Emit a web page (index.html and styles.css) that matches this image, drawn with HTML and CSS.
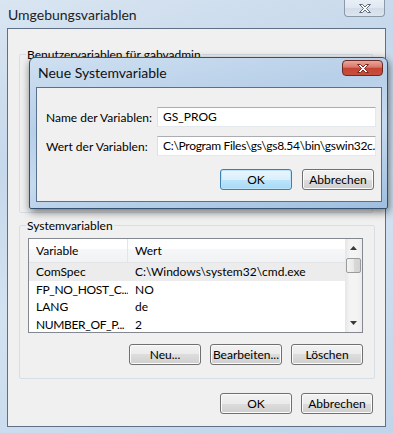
FILE: index.html
```html
<!DOCTYPE html>
<html lang="de">
<head>
    <meta charset="UTF-8">
    <meta name="viewport" content="width=device-width, initial-scale=1.0">
    <title>Umgebungsvariablen</title>
    <link rel="stylesheet" href="styles.css">
</head>
<body>
    <div class="window">
        <div class="titlebar">
            <span class="title">Umgebungsvariablen</span>
            <div class="close-btn">
                <svg width="14" height="11" viewBox="0 0 14 11">
                    <path d="M1.5 1.5h3l2.5 2.5 2.5-2.5h3l-4 4 4 4h-3l-2.5-2.5-2.5 2.5h-3l4-4z" fill="#fff" stroke="#5f6b78" stroke-width="1" stroke-linejoin="round"/>
                </svg>
            </div>
        </div>

        <div class="client">
            <fieldset class="group user-group">
                <legend>Benutzervariablen für gabvadmin</legend>
                <div class="user-space"></div>
            </fieldset>

            <fieldset class="group sys-group">
                <legend>Systemvariablen</legend>
                <div class="listview">
                    <div class="lv-main">
                        <div class="lv-header">
                            <div class="lv-col first">Variable</div>
                            <div class="lv-col">Wert</div>
                        </div>
                        <div class="lv-row selected">
                            <div class="lv-col">ComSpec</div>
                            <div class="lv-col">C:\Windows\system32\cmd.exe</div>
                        </div>
                        <div class="lv-row">
                            <div class="lv-col trunc">FP_NO_HOST_C...</div>
                            <div class="lv-col">NO</div>
                        </div>
                        <div class="lv-row">
                            <div class="lv-col">LANG</div>
                            <div class="lv-col">de</div>
                        </div>
                        <div class="lv-row">
                            <div class="lv-col trunc">NUMBER_OF_P...</div>
                            <div class="lv-col">2</div>
                        </div>
                    </div>
                    <div class="scrollbar">
                        <div class="sb-arrow">
                            <svg width="7" height="4" viewBox="0 0 7 4"><path d="M0 4h7L3.5 0z" fill="#3a3a3a"/></svg>
                        </div>
                        <div class="sb-thumb"></div>
                        <div class="sb-track"></div>
                        <div class="sb-arrow">
                            <svg width="7" height="4" viewBox="0 0 7 4"><path d="M0 0h7L3.5 4z" fill="#3a3a3a"/></svg>
                        </div>
                    </div>
                </div>
                <div class="btn-row">
                    <div class="btn">Neu...</div>
                    <div class="btn">Bearbeiten...</div>
                    <div class="btn">Löschen</div>
                </div>
            </fieldset>

            <div class="btn-row footer">
                <div class="btn">OK</div>
                <div class="btn">Abbrechen</div>
            </div>
        </div>

        <!-- modal dialog on top of the environment window -->
        <div class="dialog">
            <div class="dialog-titlebar">
                <span class="dialog-title">Neue Systemvariable</span>
                <div class="close-btn red">
                    <svg width="14" height="11" viewBox="0 0 14 11">
                        <path d="M1.5 1.5h3l2.5 2.5 2.5-2.5h3l-4 4 4 4h-3l-2.5-2.5-2.5 2.5h-3l4-4z" fill="#fff" stroke="#7a2a22" stroke-width="1" stroke-linejoin="round"/>
                    </svg>
                </div>
            </div>
            <div class="dialog-client">
                <div class="form">
                    <label>Name der Variablen:</label>
                    <div class="textbox">GS_PROG</div>
                    <label>Wert der Variablen:</label>
                    <div class="textbox path">C:\Program Files\gs\gs8.54\bin\gswin32c.exe</div>
                </div>
                <div class="btn-row dialog-buttons">
                    <div class="btn default">OK</div>
                    <div class="btn">Abbrechen</div>
                </div>
            </div>
        </div>
    </div>
</body>
</html>
```

FILE: styles.css
```css
body {
    margin: 0;
    font-family: Lato, 'Noto Sans', Arial, sans-serif;
    font-size: 12px;
    color: #000;
    background-color: #c9dbee;
}
.window {
    position: relative;
    width: 393px;
    height: 433px;
    box-sizing: border-box;
    padding: 0 7px 6px 7px;
    display: flex;
    flex-direction: column;
    background: linear-gradient(160deg, #d9e5f1 0%, #c6d8eb 30%, #d3e2f1 55%, #c0d5ea 100%);
}
.titlebar {
    height: 28px;
    display: flex;
    align-items: flex-start;
    padding-left: 1px;
}
.title {
    font-size: 14px;
    line-height: 30px;
    color: #1d1d1d;
}
.close-btn {
    margin-left: auto;
    margin-right: 1px;
    width: 41px;
    height: 17px;
    box-sizing: border-box;
    border: 1px solid #8b99a8;
    border-top: none;
    border-radius: 0 0 4px 4px;
    background: linear-gradient(#e9eff6 0%, #dfe7f0 50%, #d2dde9 51%, #dce6f0 100%);
    display: flex;
    align-items: center;
    justify-content: center;
}
.close-btn.red {
    margin-top: 2px;
    margin-right: 4px;
    height: 16px;
    border: 1px solid #6b2a22;
    border-radius: 4px;
    background: linear-gradient(#e8a89b 0%, #d9776a 45%, #c44433 50%, #c7503d 100%);
}
.client {
    flex: 1;
    border: 1px solid #5f7084;
    background-color: #f0f0f0;
    padding: 18px 12px 0 11px;
}
.group {
    margin: 0;
    border: 1px solid #d5dfe5;
    border-radius: 2px;
    padding: 0 11px 13px 8px;
}
.group legend {
    padding: 0 1px;
    margin-left: -2px;
    line-height: 15px;
}
.user-space {
    height: 137px;
}
.sys-group {
    margin-top: 5px;
    margin-right: -2px;
}
.listview {
    margin-top: 5px;
    height: 95px;
    box-sizing: border-box;
    border: 1px solid #828790;
    background-color: #fff;
    display: flex;
}
.lv-main {
    flex: 1;
    overflow: hidden;
}
.lv-header,
.lv-row {
    display: grid;
    grid-template-columns: 99px 1fr;
}
.lv-header {
    height: 24px;
    line-height: 24px;
    background: linear-gradient(#ffffff 0%, #ffffff 42%, #f6f7f9 42%, #f1f2f4 100%);
    border-bottom: 1px solid #e2e4e7;
    box-sizing: border-box;
}
.lv-header .first {
    border-right: 1px solid #e3e5e9;
}
.lv-col {
    padding-left: 7px;
    white-space: nowrap;
    overflow: hidden;
}
.lv-col.trunc {
    letter-spacing: -0.35px;
}
.lv-row {
    height: 17.5px;
    line-height: 17.5px;
}
.lv-row.selected {
    background-color: #ececec;
}
.scrollbar {
    width: 17px;
    display: flex;
    flex-direction: column;
    background: linear-gradient(90deg, #e6e6e6, #f4f4f4 30%, #f4f4f4 70%, #ececec);
}
.sb-arrow {
    height: 18px;
    display: flex;
    align-items: center;
    justify-content: center;
}
.sb-thumb {
    margin: 1px 0 0 1px;
    width: 15px;
    height: 15px;
    box-sizing: border-box;
    border: 1px solid #9b9b9b;
    border-radius: 2px;
    background: linear-gradient(90deg, #f3f3f3, #e8e8e8 50%, #d9d9d9 51%, #d2d2d2);
}
.sb-track {
    flex: 1;
}
.btn-row {
    display: flex;
    justify-content: flex-end;
    gap: 9px;
    margin-top: 11px;
}
.btn {
    width: 72px;
    height: 21px;
    box-sizing: border-box;
    border: 1px solid #707070;
    border-radius: 3px;
    background: linear-gradient(#f2f2f2 0%, #ebebeb 50%, #dddddd 50%, #cfcfcf 100%);
    box-shadow: inset 0 0 0 1px #fbfbfb;
    text-align: center;
    line-height: 19px;
}
.btn.default {
    border-color: #3c7fb1;
    background: linear-gradient(#eaf6fd 0%, #d9f0fc 50%, #bee6fd 50%, #a7d9f5 100%);
    box-shadow: inset 0 0 0 1px #bfe4f9;
}
.footer {
    margin-top: 14px;
}
.dialog {
    position: absolute;
    left: 29px;
    top: 57px;
    width: 359px;
    height: 152px;
    box-sizing: border-box;
    border: 1px solid #34506e;
    border-radius: 6px 6px 2px 2px;
    background: linear-gradient(170deg, #cfe0f1 0%, #b7cfe8 35%, #c6daee 60%, #9fbfe0 100%);
    box-shadow: 1px 3px 9px rgba(0, 0, 0, 0.55);
    display: flex;
    flex-direction: column;
}
.dialog-titlebar {
    height: 29px;
    display: flex;
    align-items: flex-start;
    padding-left: 8px;
}
.dialog-title {
    font-size: 14px;
    line-height: 30px;
    color: #111;
}
.dialog-client {
    flex: 1;
    margin: 0 5px 6px 6px;
    border: 1px solid #56708e;
    background-color: #f0f0f0;
    padding: 19px 5px 0 9px;
}
.form {
    display: grid;
    grid-template-columns: 111px 1fr;
    row-gap: 9px;
    align-items: center;
}
.form label {
    white-space: nowrap;
}
.textbox {
    height: 20px;
    box-sizing: border-box;
    border: 1px solid;
    border-color: #abadb3 #e3e9ef #e3e9ef #dbdfe6;
    background-color: #fff;
    padding-left: 5px;
    line-height: 18px;
    white-space: nowrap;
    overflow: hidden;
}
.textbox.path {
    letter-spacing: -0.3px;
}
.dialog-buttons {
    margin-top: 13px;
    gap: 10px;
    padding-right: 2px;
}
```
